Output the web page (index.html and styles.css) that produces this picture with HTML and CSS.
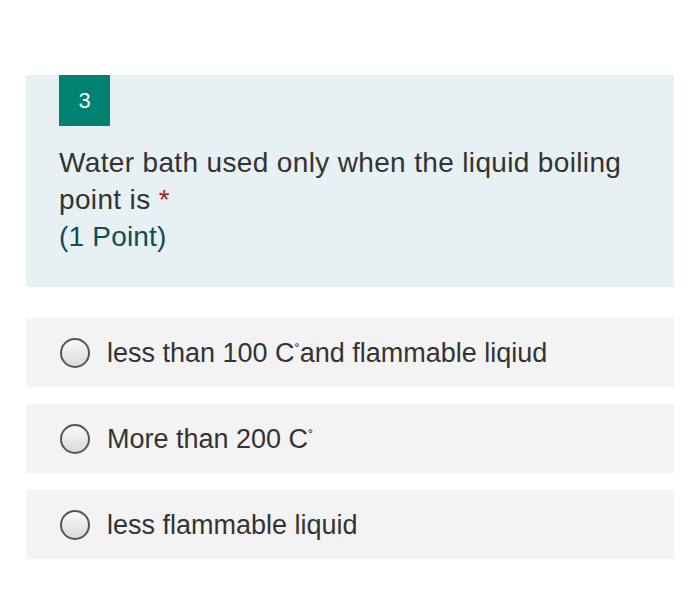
FILE: index.html
```html
<!DOCTYPE html>
<html>
<head>
<meta charset="utf-8">
<link rel="stylesheet" href="styles.css">
</head>
<body>
<div class="page">
  <div class="question">
    <div class="badge">3</div>
    <div class="qtext">Water bath used only when the liquid boiling<br>point is <span class="req">*</span></div>
    <div class="points">(1 Point)</div>
  </div>
  <div class="options">
    <div class="option"><span class="radio"></span><span class="label">less than 100 C<span class="deg">˚</span>and flammable liqiud</span></div>
    <div class="option"><span class="radio"></span><span class="label">More than 200 C<span class="deg">˚</span></span></div>
    <div class="option"><span class="radio"></span><span class="label">less flammable liquid</span></div>
  </div>
</div>
</body>
</html>
```

FILE: styles.css
```css
html, body {
  margin: 0;
  padding: 0;
  background: #ffffff;
}
body {
  font-family: "Liberation Sans", Arial, sans-serif;
  color: #333333;
}
.page {
  padding: 75px 26px 0 26px;
  width: 648px;
}
.question {
  background: #e7f0f2;
  padding: 0 10px 0 33px;
  height: 212px;
  box-sizing: border-box;
}
.badge {
  width: 51px;
  height: 51px;
  background: #008272;
  color: #ffffff;
  font-size: 22px;
  display: flex;
  align-items: center;
  justify-content: center;
}
.qtext {
  margin-top: 18px;
  font-size: 28px;
  line-height: 37px;
  letter-spacing: 0.35px;
  white-space: nowrap;
  color: #333333;
}
.req {
  color: #a4262c;
}
.points {
  font-size: 28px;
  line-height: 37px;
  letter-spacing: 0.2px;
  color: #0b4f58;
}
.options {
  margin-top: 31px;
  display: flex;
  flex-direction: column;
  gap: 17px;
}
.option {
  background: #f3f3f3;
  height: 69px;
  display: flex;
  align-items: center;
  padding-left: 34px;
}
.radio {
  width: 26px;
  height: 26px;
  border: 2px solid #555555;
  border-radius: 50%;
  background: linear-gradient(#fbfbfb, #d9d9d9);
  flex: none;
}
.label {
  margin-left: 17px;
  font-size: 27px;
  padding-top: 2px;
  color: #333333;
}
.deg {
  font-size: 15px;
  vertical-align: 7px;
}
```
